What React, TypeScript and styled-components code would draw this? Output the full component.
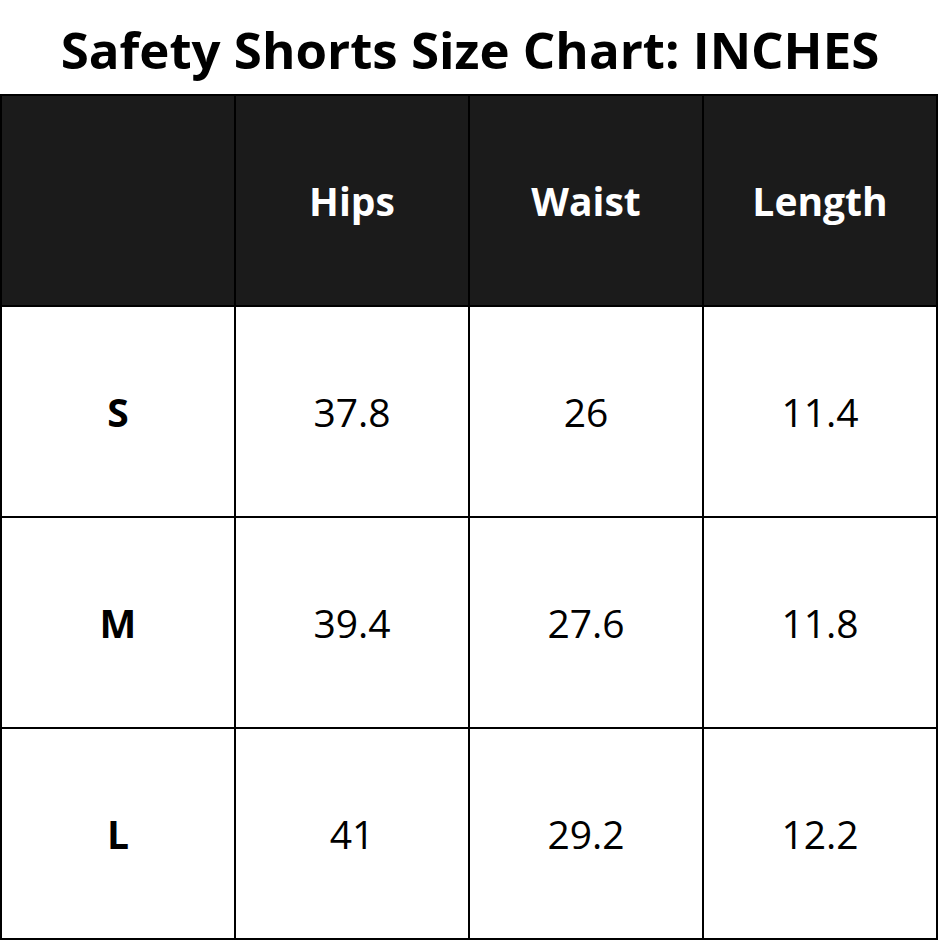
import React from "react";
import styled, { createGlobalStyle } from "styled-components";

const Global = createGlobalStyle`
  html, body { margin: 0; padding: 0; background: #ffffff; }
  body { font-family: "Open Sans", "Liberation Sans", sans-serif; }
`;

const Page = styled.div`
  width: 940px;
  height: 940px;
  display: flex;
  flex-direction: column;
  background: #fff;
`;

const Title = styled.h1`
  margin: 0;
  height: 94px;
  display: flex;
  align-items: center;
  justify-content: center;
  font-family: "Open Sans", sans-serif;
  font-weight: 700;
  font-size: 51px;
  color: #000;
  padding-top: 4px;
  box-sizing: border-box;
`;

const Table = styled.div`
  width: 938px;
  display: grid;
  grid-template-columns: repeat(4, 1fr);
  grid-auto-rows: 209px;
  gap: 2px;
  padding: 2px;
  box-sizing: border-box;
  background: #000;
`;

const Cell = styled.div<{ $head?: boolean; $bold?: boolean }>`
  display: flex;
  align-items: center;
  justify-content: center;
  background: ${(p) => (p.$head ? "#1b1b1b" : "#ffffff")};
  color: ${(p) => (p.$head ? "#ffffff" : "#000000")};
  font-family: "Open Sans", sans-serif;
  font-size: 39px;
  font-weight: ${(p) => (p.$bold ? 700 : 400)};
`;

const header = ["", "Hips", "Waist", "Length"];
const rows = [
  ["S", "37.8", "26", "11.4"],
  ["M", "39.4", "27.6", "11.8"],
  ["L", "41", "29.2", "12.2"],
];

export default function App() {
  return (
    <Page>
      <Global />
      <Title>Safety Shorts Size Chart: INCHES</Title>
      <Table>
        {header.map((h, i) => (
          <Cell key={"h" + i} $head $bold>
            {h}
          </Cell>
        ))}
        {rows.map((r, ri) =>
          r.map((c, ci) => (
            <Cell key={ri + "-" + ci} $bold={ci === 0}>
              {c}
            </Cell>
          ))
        )}
      </Table>
    </Page>
  );
}
